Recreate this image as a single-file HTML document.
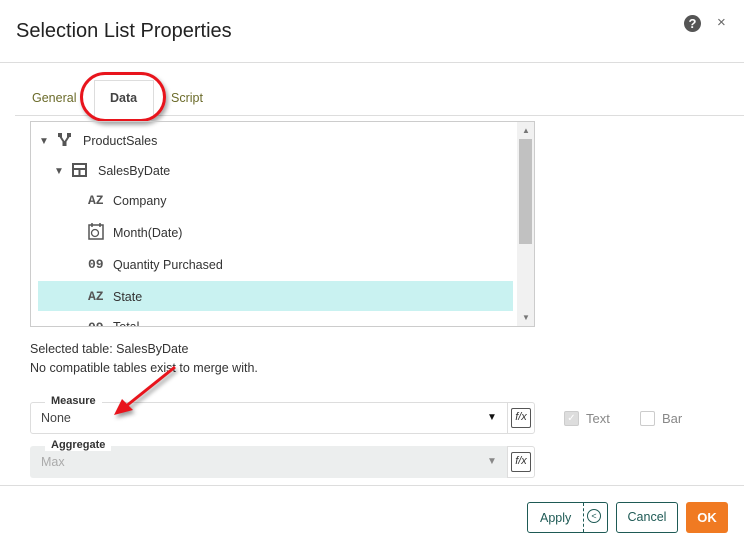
<!DOCTYPE html>
<html><head><style>
body{margin:0;width:744px;height:550px;background:#fff;font-family:"Liberation Sans",sans-serif;position:relative;overflow:hidden;color:#333}
.a{position:absolute}
.t{font-size:12.5px;color:#333}
.ic{font-family:"Liberation Mono",monospace;font-weight:bold;font-size:13px;color:#555}
.fx{position:absolute;width:18px;height:18px;border:1px solid #555;border-radius:2px;font-size:11px;font-style:italic;text-align:center;line-height:17px;color:#333;background:#fff}
</style></head><body>
<div class="a" style="left:16px;top:20px;font-size:20px;color:#222">Selection List Properties</div>
<div class="a" style="left:684px;top:15px;width:17px;height:17px;border-radius:50%;background:#555;color:#fff;font-size:13px;font-weight:bold;text-align:center;line-height:17px">?</div>
<div class="a" style="left:717px;top:14px;font-size:15px;color:#666">×</div>
<div class="a" style="left:0;top:62px;width:744px;height:1px;background:#ddd"></div>

<div class="a" style="left:32px;top:91px;font-size:12.5px;color:#6b6b2a">General</div>
<div class="a" style="left:94px;top:80px;width:58px;height:36px;border:1px solid #ddd;border-bottom:none;background:#fff"></div>
<div class="a" style="left:110px;top:91px;font-size:12.5px;font-weight:bold;color:#444">Data</div>
<div class="a" style="left:171px;top:91px;font-size:12.5px;color:#6b6b2a">Script</div>
<div class="a" style="left:15px;top:115px;width:79px;height:1px;background:#ddd"></div>
<div class="a" style="left:153px;top:115px;width:591px;height:1px;background:#ddd"></div>
<div class="a" style="left:80px;top:72px;width:80px;height:44px;border:3px solid #e8141c;border-radius:40px;box-shadow:2px 3px 4px rgba(0,0,0,.35)"></div>

<div class="a" style="left:30px;top:121px;width:503px;height:204px;border:1px solid #ccc;overflow:hidden">
 <div class="a" style="left:486px;top:0;width:17px;height:204px;background:#f1f1f1"></div>
 <div class="a" style="left:488px;top:17px;width:13px;height:105px;background:#c1c1c1"></div>
 <div class="a" style="left:491px;top:4px;font-size:8px;color:#777">▲</div>
 <div class="a" style="left:491px;top:191px;font-size:8px;color:#777">▼</div>
 <div class="a" style="left:7px;top:159px;width:475px;height:30px;background:#c9f2f1"></div>
 <div class="a" style="left:8px;top:14px;font-size:10px;color:#555">▼</div>
 <svg class="a" style="left:26px;top:10px" width="16" height="16"><rect x="1" y="1" width="4" height="4" fill="#555"/><rect x="10" y="1" width="4" height="4" fill="#555"/><rect x="5.5" y="10" width="4" height="4" fill="#555"/><path d="M3 4L7.5 11M12 4L7.5 11" stroke="#555" stroke-width="2"/></svg>
 <div class="a t" style="left:52px;top:12px">ProductSales</div>
 <div class="a" style="left:23px;top:44px;font-size:10px;color:#555">▼</div>
 <svg class="a" style="left:41px;top:41px" width="15" height="14"><rect x="1" y="1" width="13" height="12" fill="none" stroke="#555" stroke-width="2"/><path d="M1 6H14M7.5 6V13" stroke="#555" stroke-width="2"/></svg>
 <div class="a t" style="left:67px;top:42px">SalesByDate</div>
 <div class="a ic" style="left:57px;top:71px">AZ</div><div class="a t" style="left:82px;top:72px">Company</div>
 <svg class="a" style="left:57px;top:101px" width="17" height="17"><rect x="1" y="2" width="14" height="14" fill="none" stroke="#555" stroke-width="1.5"/><path d="M4 0V4M12 0V4" stroke="#555" stroke-width="1.5"/><circle cx="7" cy="10" r="3.5" fill="none" stroke="#555" stroke-width="1.3"/></svg>
 <div class="a t" style="left:82px;top:104px">Month(Date)</div>
 <div class="a ic" style="left:57px;top:135px">09</div><div class="a t" style="left:82px;top:136px">Quantity Purchased</div>
 <div class="a ic" style="left:57px;top:167px">AZ</div><div class="a t" style="left:82px;top:168px">State</div>
 <div class="a ic" style="left:57px;top:198px">09</div><div class="a t" style="left:82px;top:198px">Total</div>
</div>

<div class="a" style="left:30px;top:342px;font-size:12.5px">Selected table: SalesByDate</div>
<div class="a" style="left:30px;top:361px;font-size:12.5px">No compatible tables exist to merge with.</div>

<div class="a" style="left:30px;top:402px;width:503px;height:30px;border:1px solid #ddd;border-radius:3px"></div>
<div class="a" style="left:507px;top:403px;width:1px;height:30px;background:#ddd"></div>
<div class="a" style="left:45px;top:395px;padding:0 6px;background:#fff;font-size:11px;font-weight:bold;color:#333">Measure</div>
<div class="a" style="left:41px;top:411px;font-size:12.5px;color:#444">None</div>
<div class="a" style="left:487px;top:412px;font-size:10px;color:#111">▼</div>
<div class="fx" style="left:511px;top:408px">f/x</div>
<div class="a" style="left:564px;top:411px;width:13px;height:13px;border:1px solid #ccc;border-radius:2px;background:#ddd;color:#fff;font-size:10px;text-align:center;line-height:13px">✓</div>
<div class="a" style="left:586px;top:411px;font-size:13px;color:#888">Text</div>
<div class="a" style="left:640px;top:411px;width:13px;height:13px;border:1px solid #ccc;border-radius:2px"></div>
<div class="a" style="left:662px;top:411px;font-size:13px;color:#888">Bar</div>

<div class="a" style="left:30px;top:446px;width:477px;height:32px;background:#eceeee;border-radius:3px 0 0 3px"></div>
<div class="a" style="left:507px;top:446px;width:26px;height:30px;border:1px solid #ddd;border-radius:0 3px 3px 0"></div>
<div class="a" style="left:45px;top:439px;padding:0 6px;background:#fff;font-size:11px;font-weight:bold;color:#333">Aggregate</div>
<div class="a" style="left:41px;top:455px;font-size:12.5px;color:#aaa">Max</div>
<div class="a" style="left:487px;top:456px;font-size:10px;color:#888">▼</div>
<div class="fx" style="left:511px;top:452px">f/x</div>

<div class="a" style="left:0;top:485px;width:744px;height:1px;background:#ddd"></div>
<div class="a" style="left:527px;top:502px;width:79px;height:29px;border:1px solid #1e5a55;border-radius:3px"></div>
<div class="a" style="left:583px;top:503px;width:0;height:29px;border-left:1px dashed #1e5a55"></div>
<div class="a" style="left:540px;top:511px;font-size:12.5px;color:#1e5a55">Apply</div>
<div class="a" style="left:587px;top:509px;width:12px;height:12px;border:1.5px solid #1e5a55;border-radius:50%;font-size:9px;color:#1e5a55;text-align:center;line-height:12px">&lt;</div>
<div class="a" style="left:616px;top:502px;width:60px;height:29px;border:1px solid #1e5a55;border-radius:3px;font-size:12.5px;color:#1e5a55;text-align:center;line-height:29px">Cancel</div>
<div class="a" style="left:686px;top:502px;width:42px;height:31px;background:#f07a22;border-radius:3px;font-size:13px;font-weight:bold;color:#fff;text-align:center;line-height:31px">OK</div>

<svg class="a" style="left:100px;top:355px" width="90" height="70"><g filter="drop-shadow(2px 3px 2px rgba(0,0,0,.4))"><path d="M75 12L25 52" stroke="#e8141c" stroke-width="3"/><path d="M14 60L22 44L33 55Z" fill="#e8141c"/></g></svg>
</body></html>
